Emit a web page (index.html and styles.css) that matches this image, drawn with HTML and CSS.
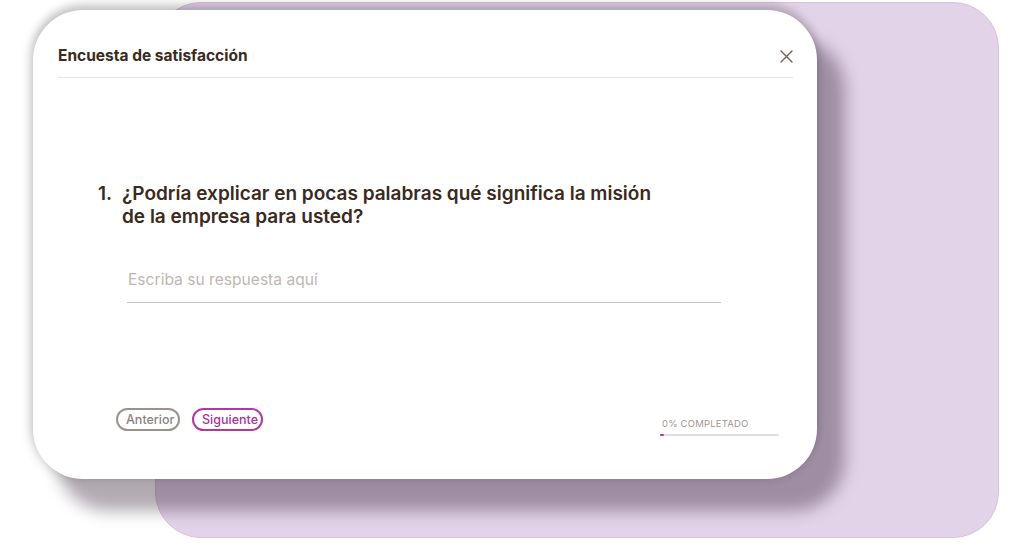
FILE: index.html
```html
<!DOCTYPE html>
<html lang="es">
<head>
<meta charset="utf-8">
<title>Encuesta de satisfacción</title>
<link rel="stylesheet" href="styles.css">
</head>
<body>
<div class="stage">
  <div class="backdrop"></div>
  <section class="card">
    <header class="card-head">
      <h1 class="card-title">Encuesta de satisfacción</h1>
      <button class="close" aria-label="Cerrar">
        <svg width="13" height="13" viewBox="0 0 13 13"><path d="M1 1L12 12M12 1L1 12" stroke="#6e625c" stroke-width="1.4" stroke-linecap="round"/></svg>
      </button>
    </header>
    <div class="question">
      <span class="q-num">1.</span>
      <p class="q-text">¿Podría explicar en pocas palabras qué significa la misión de la empresa para usted?</p>
    </div>
    <div class="answer">
      <input class="answer-input" type="text" placeholder="Escriba su respuesta aquí">
    </div>
    <footer class="card-foot">
      <div class="nav">
        <button class="pill pill-prev">Anterior</button>
        <button class="pill pill-next">Siguiente</button>
      </div>
      <div class="progress">
        <div class="progress-label">0% COMPLETADO</div>
        <div class="progress-track"><div class="progress-fill" style="width:4px"></div></div>
      </div>
    </footer>
  </section>
</div>
</body>
</html>
```

FILE: styles.css
```css
* { box-sizing: border-box; }
html, body { margin: 0; padding: 0; background: #ffffff; }
body { font-family: Inter, "Noto Sans", sans-serif; width: 1024px; height: 554px; overflow: hidden; }

.stage { position: relative; width: 1024px; height: 554px; }

.backdrop {
  position: absolute;
  left: 155px; top: 2px;
  width: 844px; height: 536px;
  border-radius: 46px;
  background: #e3d3e9;
  border: 1px solid #d6c3dd;
}

.card {
  position: absolute;
  left: 33px; top: 10px;
  width: 784px; height: 469px;
  background: #ffffff;
  border-radius: 50px;
  box-shadow: 26px 30px 16px 2px rgba(30, 10, 30, 0.34), -2px 0 12px rgba(0,0,0,0.16), 0 -6px 10px rgba(0,0,0,0.16);
  display: flex;
  flex-direction: column;
  padding: 0 24px 0 25px;
}

.card-head {
  display: flex;
  align-items: center;
  justify-content: space-between;
  padding: 34px 0 9px;
  border-bottom: 1px solid #e8e6e5;
}
.card-title {
  margin: 0;
  font-size: 15.5px;
  line-height: 24px;
  font-weight: 700;
  color: #3a2a20;
}
.close {
  border: 0; background: none; padding: 0;
  width: 13px; height: 13px; display: flex;
}

.question {
  display: flex;
  margin: 104px 0 0 40px;
  color: #3a2a20;
  font-size: 19px;
  font-weight: 600;
  line-height: 23px;
}
.q-num { width: 24px; flex: none; }
.q-text { margin: 0; width: 535px; }

.answer { margin: 35px 0 0 69px; width: 594px; }
.answer-input {
  display: block;
  width: 100%;
  height: 40px;
  border: 0;
  border-bottom: 1.5px solid #c9c4c2;
  padding: 0 0 6px 1px;
  font-family: Inter, "Noto Sans", sans-serif;
  font-size: 15.6px;
  color: #3a2a20;
  background: transparent;
  outline: none;
}
.answer-input::placeholder { color: #bfb7b3; }

.card-foot {
  display: flex;
  justify-content: space-between;
  align-items: flex-start;
  margin: 105px 0 0 58px;
}
.nav { display: flex; gap: 12px; }
.pill {
  height: 23px;
  border-radius: 12px;
  background: #fff;
  font-family: Inter, "Noto Sans", sans-serif;
  font-size: 12.5px;
  font-weight: 500;
  padding: 0 8px;
  line-height: 19px;
}
.pill-prev { border: 2px solid #9c928d; color: #8d837e; width: 64px; }
.pill-next { border: 2px solid #b0389f; color: #a8329a; width: 71px; }

.progress { width: 119px; margin: 10px 14px 0 0; }
.progress-label {
  font-size: 9.5px;
  color: #9f9692;
  letter-spacing: 0.2px;
  line-height: 12px;
  padding-left: 2px;
}
.progress-track {
  margin-top: 4px;
  height: 2px;
  background: #e2dede;
  border-radius: 1px;
}
.progress-fill { height: 2px; background: #b0389f; border-radius: 1px; }
```
